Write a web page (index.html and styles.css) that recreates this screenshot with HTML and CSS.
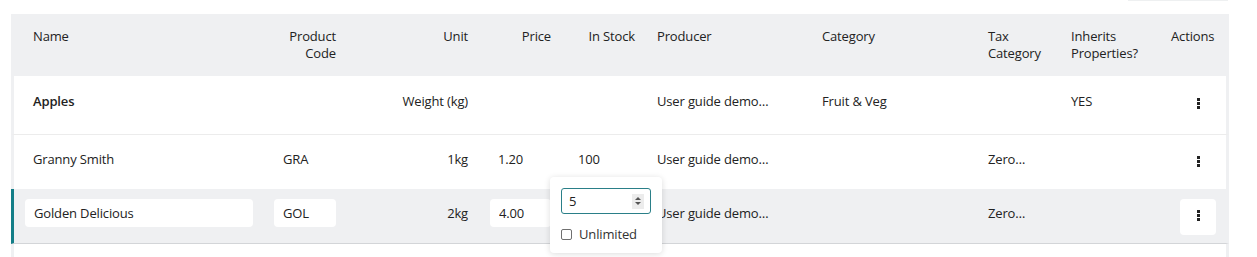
FILE: index.html
```html
<!DOCTYPE html>
<html lang="en">
<head>
<meta charset="utf-8">
<title>Products</title>
<link rel="stylesheet" href="styles.css">
</head>
<body>
<div class="topbar"><div class="topbar-edge"></div></div>
<div class="table">
  <div class="row head">
    <div class="cell c1">Name</div>
    <div class="cell c2 right">Product Code</div>
    <div class="cell c3 right">Unit</div>
    <div class="cell c4 right">Price</div>
    <div class="cell c5 right">In Stock</div>
    <div class="cell c6">Producer</div>
    <div class="cell c7">Category</div>
    <div class="cell c8">Tax Category</div>
    <div class="cell c9">Inherits Properties?</div>
    <div class="cell c10">Actions</div>
  </div>

  <div class="row body product">
    <div class="cell c1"><span class="txt bold">Apples</span></div>
    <div class="cell c2"></div>
    <div class="cell c3 right"><span class="txt">Weight (kg)</span></div>
    <div class="cell c4"></div>
    <div class="cell c5"></div>
    <div class="cell c6"><span class="txt">User guide demo…</span></div>
    <div class="cell c7"><span class="txt">Fruit &amp; Veg</span></div>
    <div class="cell c8"></div>
    <div class="cell c9"><span class="txt">YES</span></div>
    <div class="cell c10"><button class="kebab" type="button" aria-label="Actions"><svg width="3" height="11" viewBox="0 0 3 11"><rect x="0" y="0" width="3" height="3"/><rect x="0" y="4" width="3" height="3"/><rect x="0" y="8" width="3" height="3"/></svg></button></div>
  </div>

  <div class="row body">
    <div class="cell c1"><span class="txt">Granny Smith</span></div>
    <div class="cell c2"><span class="txt">GRA</span></div>
    <div class="cell c3 right"><span class="txt">1kg</span></div>
    <div class="cell c4"><span class="txt">1.20</span></div>
    <div class="cell c5"><span class="txt">100</span></div>
    <div class="cell c6"><span class="txt">User guide demo…</span></div>
    <div class="cell c7"></div>
    <div class="cell c8"><span class="txt">Zero…</span></div>
    <div class="cell c9"></div>
    <div class="cell c10"><button class="kebab" type="button" aria-label="Actions"><svg width="3" height="11" viewBox="0 0 3 11"><rect x="0" y="0" width="3" height="3"/><rect x="0" y="4" width="3" height="3"/><rect x="0" y="8" width="3" height="3"/></svg></button></div>
  </div>

  <div class="row body editing">
    <div class="cell c1 edit"><input class="field f-name" type="text" value="Golden Delicious"></div>
    <div class="cell c2 edit"><input class="field f-code" type="text" value="GOL"></div>
    <div class="cell c3 right"><span class="txt">2kg</span></div>
    <div class="cell c4 edit"><input class="field f-price" type="text" value="4.00"></div>
    <div class="cell c5 anchor">
      <div class="popup">
        <div class="numfield">
          <input class="numinput" type="text" value="5">
          <span class="spinner"><span class="tri up"></span><span class="tri down"></span></span>
        </div>
        <label class="check"><input type="checkbox" class="box"><span>Unlimited</span></label>
      </div>
    </div>
    <div class="cell c6"><span class="txt">User guide demo…</span></div>
    <div class="cell c7"></div>
    <div class="cell c8"><span class="txt">Zero…</span></div>
    <div class="cell c9"></div>
    <div class="cell c10"><button class="kebab solid" type="button" aria-label="Actions"><svg width="3" height="11" viewBox="0 0 3 11"><rect x="0" y="0" width="3" height="3"/><rect x="0" y="4" width="3" height="3"/><rect x="0" y="8" width="3" height="3"/></svg></button></div>
  </div>

  <div class="row tail"></div>
</div>
</body>
</html>
```

FILE: styles.css
```css
* { box-sizing: border-box; }

body {
  margin: 0;
  background: #fff;
  font-family: "Open Sans", "Liberation Sans", sans-serif;
  font-size: 13px;
  letter-spacing: -0.15px;
  color: #222;
}

.topbar {
  height: 14px;
  display: flex;
  justify-content: flex-end;
  padding-right: 29px;
}
.topbar-edge {
  width: 100px;
  height: 1px;
  background: #eef0f1;
}

.table {
  margin-left: 11px;
  width: 1218px;
}

.row {
  display: grid;
  grid-template-columns: 250px 82px 132px 83px 84px 167px 166px 83px 100px 65px;
  border-left: 3px solid #eff0f2;
  border-right: 3px solid #eff0f2;
}

.head {
  height: 62px;
  background: #eff0f2;
  line-height: 17px;
}
.head .cell { padding-top: 14px; }

.right { text-align: right; }

/* header text positions */
.head .c1 { padding-left: 19px; }
.head .c2, .head .c3, .head .c4, .head .c5 { padding-right: 10px; padding-left: 8px; }
.head .c6 { padding-left: 12px; padding-right: 8px; }
.head .c7, .head .c8, .head .c9, .head .c10 { padding-left: 10px; padding-right: 8px; }

.body { height: 54px; }
.body .cell { padding-top: 10px; }
.product { height: 59px; border-bottom: 1px solid #ececec; }
.product .cell { padding-top: 11px; }
.editing {
  background: #eff0f2;
  border-left-color: #137e88;
  border-bottom: 1px solid #d3d5d8;
  height: 55px;
}
.tail { height: 20px; }

.txt {
  display: block;
  line-height: 28px;
  white-space: nowrap;
}
.bold { font-weight: 600; }

.body .c1 { padding-left: 19px; }
.body .c2 { padding-left: 19px; }
.body .c3 { padding-right: 10px; }
.body .c4 { padding-left: 20px; }
.body .c5 { padding-left: 17px; }
.body .c6 { padding-left: 12px; }
.body .c7, .body .c8, .body .c9 { padding-left: 10px; }
.body .c10 { display: flex; justify-content: flex-end; padding-right: 10px; }

.body .c1.edit { padding-left: 11px; }
.body .c2.edit { padding-left: 10px; }
.body .c4.edit { padding-left: 12px; }

.field {
  display: block;
  height: 28px;
  border: 0;
  border-radius: 4px;
  background: #fff;
  padding: 0 0 0 9px;
  font-family: "Open Sans", "Liberation Sans", sans-serif;
  font-size: 13px;
  letter-spacing: -0.15px;
  color: #222;
  outline: none;
}
.f-name { width: 228px; }
.f-code { width: 62px; }
.f-price { width: 61px; }

.kebab {
  width: 36px;
  height: 36px;
  border: 0;
  border-radius: 4px;
  background: transparent;
  padding: 0;
  display: flex;
  align-items: center;
  justify-content: center;
  padding-bottom: 3px;
}
.kebab svg { fill: #222; display: block; }
.kebab.solid { background: #fff; }

.anchor { position: relative; }
.popup {
  position: absolute;
  left: -11px;
  top: -12px;
  width: 112px;
  height: 76px;
  background: #fff;
  border-radius: 4px;
  box-shadow: 0 1px 6px rgba(0, 0, 0, 0.14);
  padding: 11px 0 0 11px;
  z-index: 2;
}
.numfield {
  width: 90px;
  height: 26px;
  border: 1px solid #2a7f88;
  border-radius: 3px;
  display: flex;
  align-items: center;
  background: #fff;
}
.numinput {
  width: 60px;
  border: 0;
  padding: 0 0 0 7px;
  font-family: "Open Sans", "Liberation Sans", sans-serif;
  font-size: 13px;
  color: #222;
  outline: none;
  background: transparent;
}
.spinner {
  margin-left: auto;
  margin-right: 6px;
  width: 12px;
  height: 15px;
  background: #ececec;
  display: flex;
  flex-direction: column;
  align-items: center;
  justify-content: center;
  gap: 2px;
}
.tri {
  width: 0;
  height: 0;
  border-left: 3px solid transparent;
  border-right: 3px solid transparent;
}
.tri.up { border-bottom: 3px solid #555; }
.tri.down { border-top: 3px solid #555; }

.check {
  display: flex;
  align-items: center;
  gap: 7px;
  margin-top: 12px;
  line-height: 17px;
  color: #333;
}
.box {
  appearance: none;
  -webkit-appearance: none;
  width: 11px;
  height: 11px;
  margin: 0;
  border: 1px solid #6f6f6f;
  border-radius: 2px;
  background: #fff;
}
```
